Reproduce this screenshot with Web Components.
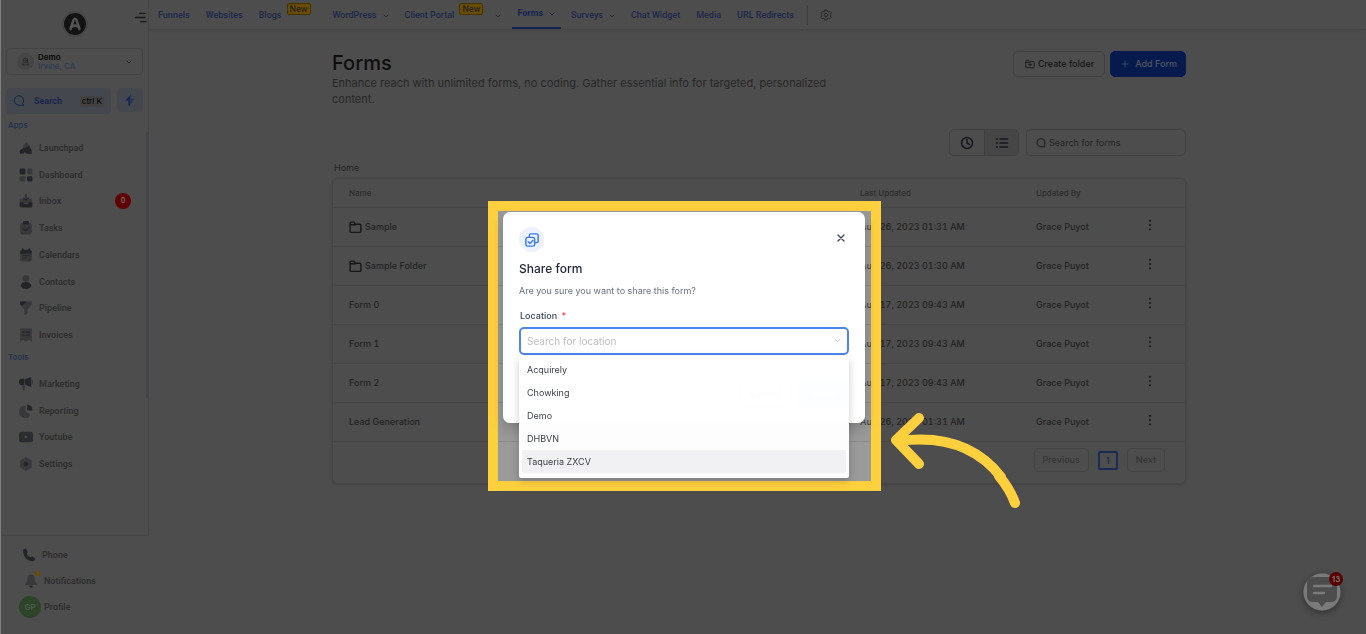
<!DOCTYPE html>
<html lang="en">
<head>
<meta charset="utf-8">
<title>Forms</title>
<style>
  html, body { margin: 0; min-height: 100%; background: #9a9a9a; }
  body { font-family: Inter, "Liberation Sans", sans-serif; }
</style>
</head>
<body>
<forms-app></forms-app>
<script>
const define = (name, html, setup) => {
  const template = document.createElement('template');
  template.innerHTML = '<style>*{box-sizing:border-box}button{font:inherit;cursor:pointer}a{color:inherit;text-decoration:none}</style>' + html;
  customElements.define(name, class extends HTMLElement {
    connectedCallback() {
      if (this.shadowRoot) return;
      this.attachShadow({ mode: 'open' }).append(template.content.cloneNode(true));
      if (setup) setup(this, this.shadowRoot);
    }
  });
};

/* viewBox 0 0 24 24; "d" and "l" classes are the dark and light tones of the two-tone set */
const ICONS = {
  chevron: '<path class="s" d="M4 8l8 8 8-8"/>',
  gear: '<circle class="s" cx="12" cy="12" r="3.5"/><path class="s" d="M10 2h4l.7 3 2.3 1 2.7-1.600 2.800 2.800L21 10l.8 2-.8 2.200 1.300 2.600-2.800 2.800-2.600-1.300-2.300 1-.7 2.700h-4l-.7-2.700-2.200-1-2.700 1.300-2.800-2.800L4 14.200 3 12l1-2.200-1.500-2.600 2.800-2.800L8 6l1.400-1z"/>',
  search: '<path class="s" d="M20.500 20.500H12a9.500 9.500 0 1 1 7.500-3.800z"/>',
  bolt: '<path class="d" d="M14 1L2 13h7v10h3V9z"/><path class="l" d="M14 1v8h8L11 23z"/>',
  menu: '<path class="s" d="M10 3h12M1 12h21M12 21h12"/>',
  person: '<circle class="s" cx="12" cy="9" r="6"/><circle class="s" cx="12" cy="9" r="2"/><path class="s" d="M7 14l-4 7h18l-4-7"/>',
  launch: '<path class="l" d="M6 10L12 2l7 6-2 5-9 1z"/><path class="d" d="M1 18c1-5 6-5 11-7l6-2 4 8v5h-9l-3-3-3 3H2z"/>',
  dashboard: '<rect class="d" x="1" y="1" width="10" height="10" rx="2"/><rect class="l" x="14" y="1" width="9" height="10" rx="2"/><rect class="l" x="1" y="14" width="10" height="9" rx="2"/><rect class="d" x="14" y="14" width="9" height="9" rx="2"/>',
  inbox: '<path class="l" d="M2 8h6l4 5 4-5h6v8H2z"/><path class="d" d="M1 14h6l2 3h6l2-3h6v6a3 3 0 0 1-3 3H4a3 3 0 0 1-3-3z"/><path class="s" d="M12 1v10M8 7l4 4 4-4"/>',
  tasks: '<rect class="l" x="2" y="3" width="20" height="20" rx="4"/><rect class="d" x="7" y="0" width="10" height="6" rx="2"/><path class="s" d="M8 14l3 3 6-6"/>',
  calendar: '<rect class="l" x="2" y="5" width="20" height="18" rx="3"/><path class="d" d="M2 10V5l3-2V1h3v2h8V1h3v2l3 2v5z"/><path class="s" d="M7 17h6M7 13h10" style="stroke-width:1.500"/>',
  contact: '<circle class="l" cx="12" cy="6" r="6"/><ellipse class="d" cx="12" cy="18" rx="9" ry="6"/>',
  funnel: '<path class="l" d="M2 1h20v5l-7 8v7l-6 3V14L2 6z"/><path class="d" d="M2 1h12L4 9 2 6z"/>',
  invoice: '<path class="l" d="M2 1h20v22l-5-3-5 3-5-3-5 3z"/><path class="s" d="M6 7h3M12 7h6M6 12h3M12 12h6"/>',
  marketing: '<path class="d" d="M0 6l3-3h6v11H3l-3-3zM10 4l11-4v17l-11-4z"/><path class="l" d="M5 15h5v8H7zM22 5h2v7h-2z"/>',
  report: '<path class="l" d="M11 3v10l9 5A10.500 10.500 0 1 1 11 3z"/><path class="d" d="M14 1a9 9 0 0 1 9 9v1h-9z"/>',
  youtube: '<rect class="d" x="0" y="3" width="24" height="18" rx="4" opacity=".8"/><path class="k" d="M10 9l5 3-5 3z"/>',
  settings: '<path class="l" d="M12 0l10 6v12l-10 6L2 18V6z"/><circle class="d" cx="12" cy="12" r="4"/>',
  phone: '<path class="d" d="M2 3l4-2 4 6-2 3c1 3 4 5 6 6l3-2 6 4-2 4c-2 1-5 1-8 0C6 19 1 11 2 3z"/>',
  bell: '<path class="l" d="M12 1c5 0 6 4 6 8 0 3 2 5 4 8v2H2v-2c2-3 4-5 4-8 0-4 1-8 6-8z"/><path class="d" d="M8 20h8l-4 4z"/>',
  folder: '<path class="s" d="M2 20V4a2 2 0 0 1 2-2h5l3 4h8a2 2 0 0 1 2 2v11a2 2 0 0 1-2 2H4a2 2 0 0 1-2-2zM2 7h10"/>',
  folderplus: '<path class="s" d="M2 19V5a2 2 0 0 1 2-2h5l3 3h8a2 2 0 0 1 2 2v11a2 2 0 0 1-2 2H4a2 2 0 0 1-2-2zM2 8h10M12 10v7M8.500 13.500h7"/>',
  plus: '<path class="s" d="M12 3v18M3 12h18"/>',
  clock: '<circle class="s" cx="12" cy="12" r="11"/><path class="s" d="M12 5v7l5 3"/>',
  list: '<path class="s" d="M8 4h15M8 12h15M8 20h15M1 4h2M1 12h2M1 20h2"/>',
  dots: '<circle class="d" cx="12" cy="2" r="2.500"/><circle class="d" cx="12" cy="12" r="2.500"/><circle class="d" cx="12" cy="22" r="2.500"/>',
  close: '<path class="s" d="M3 3l18 18M21 3L3 21"/>',
  copy: '<rect class="s" x="1.500" y="7.500" width="15" height="15" rx="3"/><path class="s" d="M7.500 7V4a2.500 2.500 0 0 1 2.500-2.500h10A2.500 2.500 0 0 1 22.500 4v10a2.500 2.500 0 0 1-2.500 2.500h-3M5.500 15l3 3 5-5"/>'
};
customElements.define('app-icon', class extends HTMLElement {
  connectedCallback() {
    if (this.shadowRoot) return;
    this.attachShadow({ mode: 'open' }).innerHTML = `<style>
      :host{display:inline-block;flex:none;width:var(--size,12px);height:var(--size,12px)}
      svg{display:block;width:100%;height:100%;overflow:visible}
      .s{fill:none;stroke:currentColor;stroke-width:var(--stroke,2);stroke-linecap:round;stroke-linejoin:round}
      .d{fill:currentColor}.l{fill:currentColor;opacity:.5}.k{fill:#9a9a9a}
    </style><svg viewBox="0 0 24 24" aria-hidden="true">${ICONS[this.getAttribute('name')]}</svg>`;
  }
});

define('nav-item', `<style>
  :host{display:block;height:29px}
  a{display:flex;align-items:center;height:29px;padding-top:2px;font:500 9px/27px Roboto,sans-serif;color:#3e5098;white-space:nowrap}
  app-icon{--size:6px;--stroke:4;margin-left:6px}
  .tag{align-self:flex-start;display:none;margin:1px 0 0 5px;width:24px;height:12px;background:#d09a00;border:1px solid #8c6800;border-radius:2px;font:500 9px/10px Roboto,sans-serif;color:#584a48;text-align:center}
  :host([tag]) .tag{display:block}
  :host([tag]) app-icon{margin-left:12px}
  :host(:not([menu])) app-icon{display:none}
  :host([active]) a{font-weight:700;color:#2a48a4;border-bottom:2px solid #1f44a8;padding:0 6px 0 5px;margin:0 -6px 0 -5px}
</style><a href="#"><slot></slot><span class="tag">New</span><app-icon name="chevron"></app-icon></a>`);

define('app-nav', `<style>
  :host{display:flex;align-items:center;gap:16px;height:30px;padding-left:9px;border-bottom:1px solid #8c8c8c;box-shadow:0 1px 3px rgba(0,0,0,.08)}
  nav{display:contents}
  .wide{margin-right:6px}
  .gear{display:flex;margin-left:-3px;padding:0 0 0 12px;height:20px;align-items:center;border:0;border-left:1px solid #7c7c7c;background:none;color:#505050}
  app-icon{--size:12px}
</style>
<nav aria-label="Sites">
<nav-item>Funnels</nav-item><nav-item>Websites</nav-item><nav-item tag class="wide">Blogs</nav-item>
<nav-item menu>WordPress</nav-item><nav-item tag menu>Client Portal</nav-item><nav-item active menu>Forms</nav-item>
<nav-item menu>Surveys</nav-item><nav-item>Chat Widget</nav-item><nav-item>Media</nav-item><nav-item>URL Redirects</nav-item>
<button class="gear" aria-label="Settings"><app-icon name="gear"></app-icon></button></nav>`);

define('side-item', `<style>
  :host{display:block}
  a{display:flex;align-items:center;gap:6px;height:22px;font:600 9px/22px Roboto,sans-serif;color:#5a5a5a}
  app-icon{--size:14px;color:#45484f}
  .count{margin-left:auto;width:16px;height:16px;border-radius:50%;background:#c00000;color:#ccc;font:700 7px/16px Inter,sans-serif;text-align:center}
</style><a href="#"><slot></slot></a>`, (el, root) => {
  const link = root.querySelector('a');
  const icon = document.createElement('app-icon');
  icon.setAttribute('name', el.getAttribute('icon'));
  link.prepend(icon);
  if (el.hasAttribute('count')) {
    const badge = document.createElement('span');
    badge.className = 'count';
    badge.textContent = el.getAttribute('count');
    link.append(badge);
  }
});

define('app-sidebar', `<style>
  :host{display:flex;flex-direction:column;width:149px;min-height:100vh;border-left:1px solid #fff}
  .top{position:relative;display:flex;flex-direction:column;min-height:536px;padding:11px 5px 0;border-right:1px solid #8a8a8a;border-bottom:1px solid #8a8a8a}
  .brand{display:flex;justify-content:center;height:26px}
  .logo{width:26px;height:26px}
  .toggle{position:absolute;display:grid;right:2px;top:12px;padding:0;border:0;background:none;color:#333;--size:11px;--stroke:3}
  .account{display:flex;align-items:center;gap:4px;height:27px;margin-top:11px;padding:0 10px;border:1px solid #868686;border-radius:4px;background:none;text-align:left;color:#444}
  .account .pic{display:grid;place-items:center;width:17px;height:17px;border-radius:50%;background:#8a8a8a;color:#4a4a4a;--size:9px}
  .account b{display:block;font:600 8px/10px Inter,sans-serif;color:#0c0c0c}
  .account small{display:block;font:500 8px/9px Inter,sans-serif;color:#5f78a8}
  .account .chev{margin-left:auto;--size:6px;--stroke:4}
  .tools{display:flex;gap:6px;margin-top:13px}
  .search{display:flex;align-items:center;flex:1;height:26px;padding:0 7px;border:0;border-radius:4px;background:#8a8e9c;font:600 9px/26px Roboto,sans-serif;color:#2c4898}
  .search app-icon{--size:12px;--stroke:2;margin-right:9px}
  kbd{margin-left:auto;padding:0 2px;border-radius:2px;background:#828282;font:500 8px/11px Inter,sans-serif;color:#111}
  .bolt{display:grid;place-items:center;width:26px;height:24px;padding:0;border:0;border-radius:4px;background:#8a8e9c;color:#2448a8}
  h2{margin:6px 0 0 2px;font:500 8px/10px Inter,sans-serif;color:#4460a0}
  .apps,.more{display:flex;flex-direction:column;justify-content:space-between;padding:0 12px 0 13px}
  .apps{height:209px;margin-top:7px}
  .more{height:102px;margin-top:11px}
  .bar{position:absolute;right:0;top:132px;width:2px;height:266px;background:#878a92}
  .bottom{padding:8px 0 0 18px;display:grid;gap:4px}
  .bottom .bell{position:relative}
  .bell i{position:absolute;left:16px;top:1px;width:5px;height:5px;border-radius:50%;background:#d89800}
  .phone{padding-left:3px}.bell{padding-left:5px}
  .profile{display:flex;align-items:center;gap:3px;font:600 9px/22px Roboto,sans-serif;color:#5a5a5a}
  .profile span{width:22px;height:22px;border-radius:50%;background:#588a50;color:#a8bca4;font:500 8px/22px Inter,sans-serif;text-align:center}
</style>
<div class="top">
  <div class="brand"><svg class="logo" viewBox="0 0 26 26" role="img" aria-label="Agency logo"><circle cx="13" cy="13" r="12.500" fill="none" stroke="#868686"/><circle cx="13" cy="13" r="11" fill="#262626"/><path d="M8.500 18l3-9q1.500-2.500 3 0l3 9M10.500 15.500q2.500-2 5 0" fill="none" stroke="#a8a8a8" stroke-width="2.400" stroke-linecap="round" stroke-linejoin="round"/></svg></div>
  <button class="toggle" aria-label="Toggle menu"><app-icon name="menu"></app-icon></button>
  <button class="account"><span class="pic"><app-icon name="person"></app-icon></span><span><b>Demo</b><small>Irvine, CA</small></span><app-icon class="chev" name="chevron"></app-icon></button>
  <div class="tools"><button class="search"><app-icon name="search"></app-icon>Search<kbd>ctrl K</kbd></button><button class="bolt" aria-label="Quick actions"><app-icon name="bolt"></app-icon></button></div>
  <h2>Apps</h2>
  <div class="apps"><side-item icon="launch">Launchpad</side-item><side-item icon="dashboard">Dashboard</side-item><side-item icon="inbox" count="0">Inbox</side-item><side-item icon="tasks">Tasks</side-item><side-item icon="calendar">Calendars</side-item><side-item icon="contact">Contacts</side-item><side-item icon="funnel">Pipeline</side-item><side-item icon="invoice">Invoices</side-item></div>
  <h2>Tools</h2>
  <div class="more"><side-item icon="marketing">Marketing</side-item><side-item icon="report">Reporting</side-item><side-item icon="youtube">Youtube</side-item><side-item icon="settings">Settings</side-item></div>
  <div class="bar"></div>
</div>
<div class="bottom">
  <div class="phone"><side-item icon="phone">Phone</side-item></div>
  <div class="bell"><side-item icon="bell">Notifications</side-item><i></i></div>
  <a class="profile" href="#"><span>GP</span>Profile</a>
</div>`);

define('forms-table', `<style>
  :host{display:block;min-height:306px;border:1px solid #8a8a8a;border-radius:5px;box-shadow:0 1px 3px rgba(0,0,0,.12)}
  table{width:100%;border-collapse:collapse;table-layout:fixed;text-align:left}
  th{height:28px;padding:0;border-bottom:1px solid #8a8a8a;font:500 8px/28px Inter,sans-serif;color:#585858}
  td{height:39px;padding:0;border-bottom:1px solid #8a8a8a;font:500 9px/38px Inter,sans-serif;font-variant-numeric:tabular-nums;color:#464646;white-space:nowrap}
  th:first-child,td:first-child{padding-left:16px}
  .by{width:109px}.at{width:176px}.act{width:40px}
  td app-icon{--size:13px;--stroke:2.500;color:#2c2c2c;vertical-align:middle;margin-right:3px}
  td button{display:grid;padding:0 0 4px;border:0;background:none;line-height:10px}
  td button app-icon{--size:10px;margin:0;color:#303030}
  .pages{display:flex;justify-content:flex-end;align-items:center;gap:9px;padding:6px 20px 0 0}
  .pages button{height:24px;padding:0 8px;border:1px solid #8a8a8a;border-radius:4px;background:none;font:500 9px/20px Inter,sans-serif;color:#6a6a6a}
  .pages .now{width:20px;height:19px;padding:0;border:2px solid #3454a4;border-radius:2px;line-height:15px;color:#3454a4}
</style>
<table><colgroup><col><col class="at"><col class="by"><col class="act"></colgroup>
<thead><tr><th>Name</th><th>Last Updated</th><th>Updated By</th><th></th></tr></thead><tbody></tbody></table>
<div class="pages"><button>Previous</button><button class="now" aria-current="page">1</button><button>Next</button></div>`, (el, root) => {
  const rows = [['Sample', '26, 2023 01:31', 1], ['Sample Folder', '26, 2023 01:30', 1], ['Form 0', '17, 2023 09:43'], ['Form 1', '17, 2023 09:43'], ['Form 2', '17, 2023 09:43'], ['Lead Generation', '26, 2023 01:31']];
  root.querySelector('tbody').innerHTML = rows.map(([name, at, folder]) =>
    `<tr><td>${folder ? '<app-icon name="folder"></app-icon>' : ''}${name}</td><td>Aug ${at} AM</td><td>Grace Puyot</td><td><button aria-label="Actions for ${name}"><app-icon name="dots"></app-icon></button></td></tr>`).join('');
});

define('forms-page', `<style>
  :host{display:block;padding:21px 180px 0 183px}
  header{display:flex;justify-content:space-between;align-items:flex-start}
  h1{margin:0;font:500 20px/24px Inter,sans-serif;color:#1c1c1e}
  p{margin:0;max-width:520px;font:400 11px/16px Inter,sans-serif;color:#505050}
  .actions{display:flex;gap:5px}
  .actions button{display:flex;align-items:center;gap:3px;height:26px;padding:0 10px 0 11px;border:1px solid #808080;border-radius:5px;background:none;font:500 9px/24px Inter,sans-serif;color:#2c2c2c;white-space:nowrap}
  .actions app-icon{--size:10px}
  .actions .add{padding:0 8px 0 10px;border-color:#0d359c;background:#0d359c;color:#a4acc4;gap:6px}
  .actions .add app-icon{--size:8px}
  .tools{display:flex;justify-content:flex-end;gap:7px;margin-top:22px}
  .views{display:flex;border:1px solid #808080;border-radius:5px;overflow:hidden}
  .views button{display:grid;place-items:center;width:34px;height:25px;padding:0;border:0;background:none;color:#2e3038;--size:12px;--stroke:3}
  .views button+button{border-left:1px solid #808080;background:#8c8c8c}
  .find{display:flex;align-items:center;gap:3px;width:160px;height:27px;padding:0 9px;border:1px solid #808080;border-radius:5px;color:#484a50;--size:10px;--stroke:3}
  input{flex:1;min-width:0;padding:0;border:0;background:none;outline:0;font:400 9px/16px Inter,sans-serif;color:#484848}
  input::placeholder{color:#484848;opacity:1}
  .crumb{display:block;margin:5px 0 4px 2px;font:400 9px/13px Inter,sans-serif;color:#484848}
</style>
<header><div><h1>Forms</h1><p>Enhance reach with unlimited forms, no coding. Gather essential info for targeted, personalized content.</p></div>
<div class="actions"><button><app-icon name="folderplus"></app-icon>Create folder</button><button class="add"><app-icon name="plus"></app-icon>Add Form</button></div></header>
<div class="tools"><div class="views"><button aria-label="Recent"><app-icon name="clock"></app-icon></button><button aria-label="List"><app-icon name="list"></app-icon></button></div>
<label class="find"><app-icon name="search"></app-icon><input type="text" aria-label="Search for forms" placeholder="Search for forms"></label></div>
<a class="crumb" href="#">Home</a>
<forms-table></forms-table>`);

define('share-dialog', `<style>
  :host{display:block;width:362px;padding:15px 16px 16px;border-radius:7px;background:#fff;box-shadow:0 6px 14px rgba(0,0,0,.2)}
  .head{display:flex;justify-content:space-between;align-items:flex-start}
  .mark{display:grid;place-items:center;width:25px;height:25px;border-radius:50%;background:#edf2ff;color:#3b78f5;--size:14px;--stroke:2.500}
  .close{display:grid;margin:7px 4px 0 0;padding:0;border:0;background:none;color:#3c4456;--size:8px;--stroke:4}
  h2{margin:8px 0 0;font:500 12px/18px Inter,sans-serif;color:#1d2433}
  p{margin:6px 0 0;font:400 9px/14px Inter,sans-serif;color:#667085}
  label{display:block;margin:11px 0 4px 1px;font:500 9px/14px Inter,sans-serif;color:#344054}
  label span{margin-left:2px;color:#e0453a}
  .field{position:relative;display:flex;align-items:center;height:28px;padding:0 6px 1px;border:2px solid #4d84f0;border-radius:5px;color:#c0c4cc;--size:7px;--stroke:3}
  input{flex:1;min-width:0;padding:0;border:0;outline:0;background:none;font:400 10px/16px Inter,sans-serif;color:#344054}
  input::placeholder{color:#bdbdc2;opacity:1}
  ul{position:absolute;left:-2px;right:-2px;top:27px;margin:0;padding:2px 3px 5px;list-style:none;border-radius:2px;background:rgba(255,255,255,.98);box-shadow:0 3px 8px rgba(0,0,0,.2)}
  li{height:23px;padding:0 5px;font:400 9px/24px Inter,sans-serif;color:#3c4148}
  li[aria-selected=true]{background:#f1f1f3;border-radius:2px}
  .foot{display:flex;justify-content:flex-end;gap:7px;margin-top:26px}
  .foot button{width:51px;height:26px;padding:0;border:1px solid #d0d5dd;border-radius:4px;background:#fff;font:500 9px/24px Inter,sans-serif;color:#555}
  .foot .ok{border-color:#a8c4f8;background:#a8c4f8;color:#fff}
</style>
<div class="head"><span class="mark"><app-icon name="copy"></app-icon></span><button class="close" aria-label="Close"><app-icon name="close"></app-icon></button></div>
<h2>Share form</h2><p>Are you sure you want to share this form?</p>
<label for="loc">Location <span>*</span></label>
<div class="field"><input id="loc" role="combobox" aria-expanded="true" aria-controls="opts" placeholder="Search for location"><app-icon name="chevron"></app-icon>
<ul id="opts" role="listbox"><li role="option">Acquirely</li><li role="option">Chowking</li><li role="option">Demo</li><li role="option">DHBVN</li><li role="option" aria-selected="true">Taqueria ZXCV</li></ul></div>
<div class="foot"><button>Cancel</button><button class="ok">Share</button></div>`);

define('tour-spotlight', `<style>
  :host{position:fixed;inset:0;display:flex;justify-content:center;align-items:flex-start;padding:201px 0 0 3px;overflow:hidden;z-index:5}
  .frame{position:relative;padding:1px 6px 58px 5px;border:10px solid #ffd03e;box-shadow:0 0 0 2000px rgba(0,0,0,.5)}
  svg{position:absolute;left:387px;top:194px;width:150px;height:110px}
</style><div class="frame"><slot></slot>
<svg viewBox="0 0 150 110" fill="none" stroke="#ffd03e" stroke-width="10" stroke-linecap="round" stroke-linejoin="round" aria-hidden="true"><path d="M34 13L11 35l23 24"/><path d="M13 36c45-6 80 6 103 36"/><path d="M114 71q11 13 16 27"/></svg></div>`);

define('chat-launcher', `<style>
  :host{position:fixed;right:25px;bottom:23px;width:38px;height:38px}
  button{display:block;width:38px;height:38px;padding:0;border:0;border-radius:50%;background:none;box-shadow:0 2px 6px rgba(0,0,0,.35)}
  svg{display:block}
  span{position:absolute;right:-2px;top:-1px;width:14px;height:14px;border-radius:50%;background:#b40000;color:#ddd;font:700 8px/14px Inter,sans-serif;text-align:center}
</style><button aria-label="Open chat"><svg width="38" height="38" viewBox="0 0 38 38"><circle cx="19" cy="19" r="18.500" fill="#f4f4f4"/><path d="M10 4h18q6 0 6 6v13q0 6-6 6h-5l-4 5-4-5h-5q-6 0-6-6V10q0-6 6-6z" fill="#9a9a9a"/><path d="M11 13h17M11 20h10" stroke="#f4f4f4" stroke-width="2.500" stroke-linecap="round"/></svg></button><span>13</span>`);

define('forms-app', `<style>
  :host{display:flex;min-height:100vh;background:#9a9a9a}
  main{flex:1;min-width:0}
</style>
<app-sidebar></app-sidebar><main><app-nav></app-nav><forms-page></forms-page></main>
<chat-launcher></chat-launcher>
<tour-spotlight><share-dialog role="dialog" aria-label="Share form"></share-dialog></tour-spotlight>`);
</script>
</body>
</html>
